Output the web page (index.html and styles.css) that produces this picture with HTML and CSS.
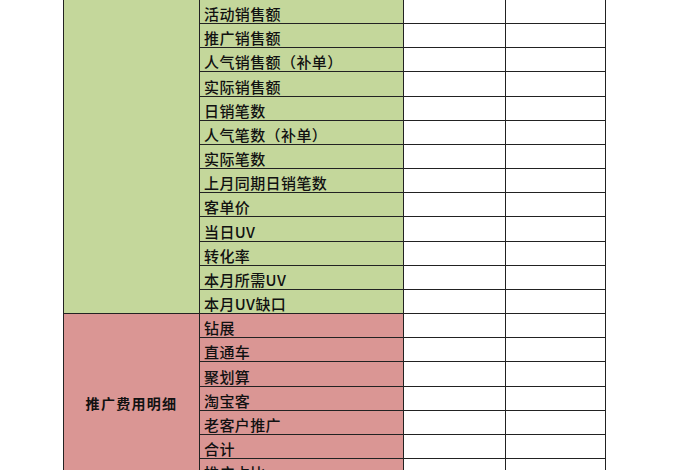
FILE: index.html
```html
<!DOCTYPE html>
<html lang="zh">
<head>
<meta charset="utf-8">
<link rel="stylesheet" href="styles.css">
</head>
<body>
<div class="sheet">
<table class="grid">
<colgroup>
<col class="c-group"><col class="c-label"><col class="c-val"><col class="c-val2">
</colgroup>
<tbody>
<tr><td class="group green" rowspan="13"></td><td class="label green">活动销售额</td><td></td><td></td></tr>
<tr><td class="label green">推广销售额</td><td></td><td></td></tr>
<tr><td class="label green">人气销售额（补单）</td><td></td><td></td></tr>
<tr><td class="label green">实际销售额</td><td></td><td></td></tr>
<tr><td class="label green">日销笔数</td><td></td><td></td></tr>
<tr><td class="label green">人气笔数（补单）</td><td></td><td></td></tr>
<tr><td class="label green">实际笔数</td><td></td><td></td></tr>
<tr><td class="label green">上月同期日销笔数</td><td></td><td></td></tr>
<tr><td class="label green">客单价</td><td></td><td></td></tr>
<tr><td class="label green">当日UV</td><td></td><td></td></tr>
<tr><td class="label green">转化率</td><td></td><td></td></tr>
<tr><td class="label green">本月所需UV</td><td></td><td></td></tr>
<tr><td class="label green">本月UV缺口</td><td></td><td></td></tr>
<tr><td class="group red" rowspan="8"><span class="group-title">推广费用明细</span></td><td class="label red">钻展</td><td></td><td></td></tr>
<tr><td class="label red">直通车</td><td></td><td></td></tr>
<tr><td class="label red">聚划算</td><td></td><td></td></tr>
<tr><td class="label red">淘宝客</td><td></td><td></td></tr>
<tr><td class="label red">老客户推广</td><td></td><td></td></tr>
<tr><td class="label red">合计</td><td></td><td></td></tr>
<tr><td class="label red">推广占比</td><td></td><td></td></tr>
<tr><td class="label red">&nbsp;</td><td></td><td></td></tr>
</tbody>
</table>
</div>
</body>
</html>
```

FILE: styles.css
```css
html, body {
  margin: 0;
  padding: 0;
  background: #ffffff;
  overflow: hidden;
  height: 470px;
}

.sheet {
  padding-left: 63px;
  margin-top: -1px;
}

.grid {
  border-collapse: collapse;
  table-layout: fixed;
  width: 543px;
  font-family: "Noto Sans CJK SC", "Microsoft YaHei", sans-serif;
  font-size: 15px;
  color: #111111;
}

.c-group { width: 136px; }
.c-label { width: 204px; }
.c-val { width: 102px; }
.c-val2 { width: 100px; }

.grid tr {
  height: 24.17px;
}

.grid td {
  border: 1px solid #222222;
  padding: 0;
  background: #ffffff;
}

.grid td.green { background: #c4d79b; }
.grid td.red { background: #da9694; }

.label {
  padding: 0 0 0 4px !important;
  vertical-align: bottom;
  line-height: 19px;
  white-space: nowrap;
  font-weight: 500;
  letter-spacing: 0.4px;
}

.group {
  text-align: center;
  vertical-align: middle;
}

.group-title {
  display: inline-block;
  font-size: 14px;
  font-weight: 700;
  letter-spacing: 1.3px;
  padding-bottom: 16px;
}
```
